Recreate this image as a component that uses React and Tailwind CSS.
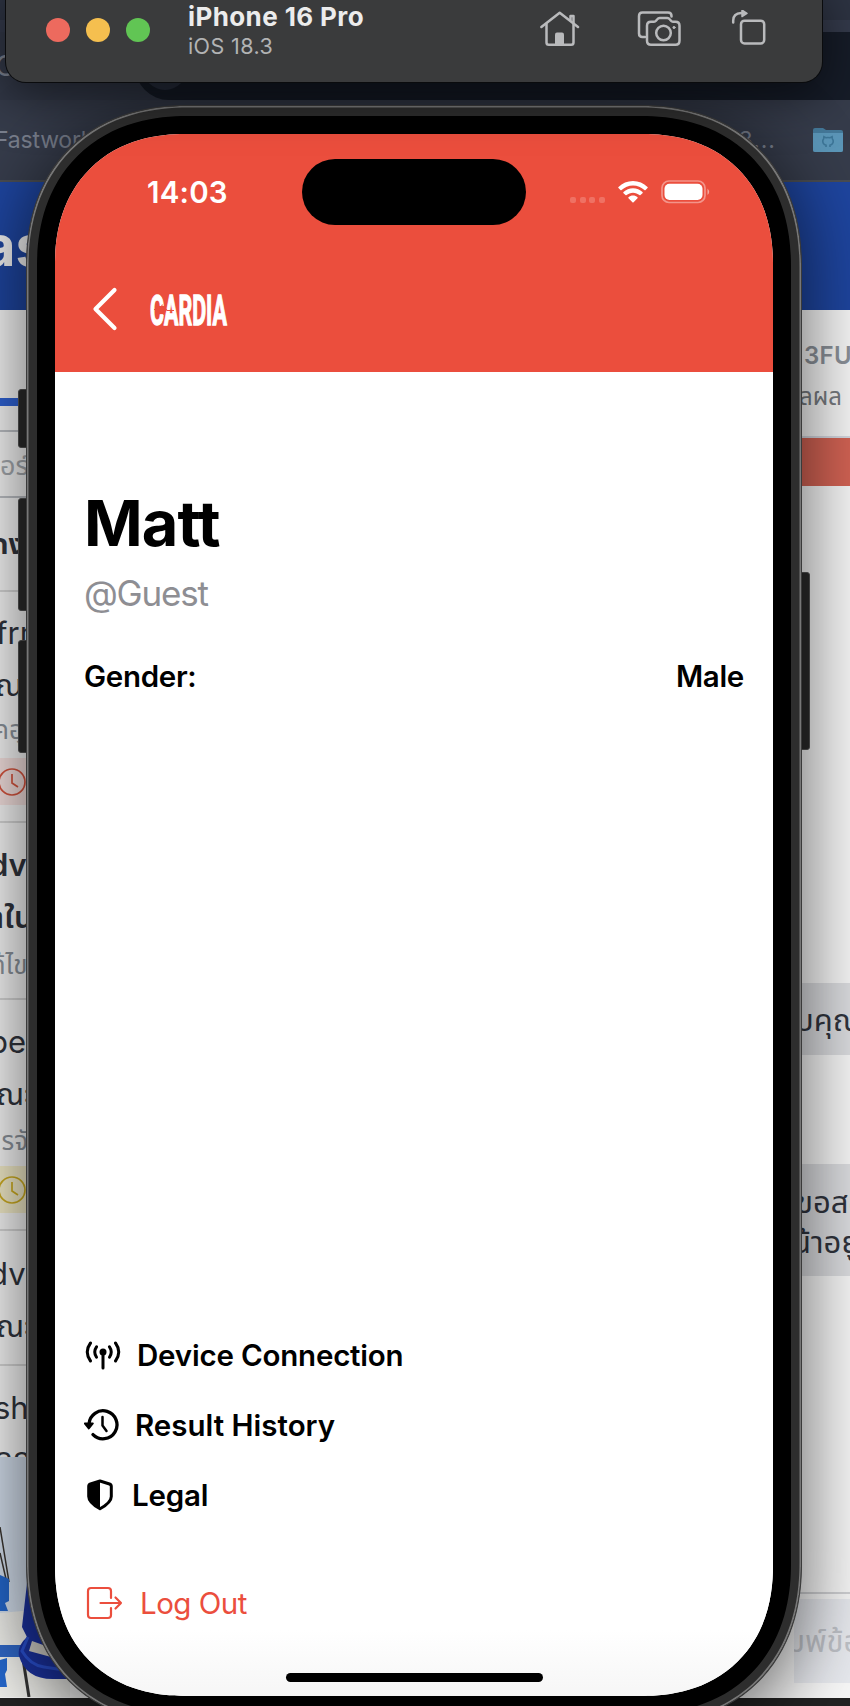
const fontStack = "font-['Inter','Noto_Sans','Noto_Sans_Thai','Loma','Garuda',sans-serif]";

function Line({ className, children }) {
  return (
    <div className={`flex shrink-0 items-center overflow-hidden whitespace-nowrap ${className}`}>
      <span>{children}</span>
    </div>
  );
}

function ClockBand({ className }) {
  return (
    <div className={`flex h-[47px] shrink-0 items-center ${className}`}>
      <svg width="28" height="28" viewBox="0 0 28 28" className="-ml-[2px] shrink-0" fill="none" stroke="currentColor" strokeWidth="1.7">
        <circle cx="14" cy="14" r="13" />
        <path d="M14 6v9l6 4" />
      </svg>
    </div>
  );
}

function Browser() {
  return (
    <div className="flex h-[1706px] w-[850px] flex-col bg-[#222]">
      <div className="h-5 shrink-0 bg-[#2d3342]" />
      <div className="flex h-3 shrink-0 justify-end bg-[#343a4b]" />
      <div className="flex h-[68px] shrink-0 items-start bg-[#323847]">
        <span className="-ml-[5px] mt-[16px] text-[28px] leading-9 text-[#7b818f]">G</span>
        <div className="ml-[119px] h-[68px] flex-1 rounded-bl-[34px] bg-[#161c28] pl-2">
          <div className="h-[58px] w-[44px] rounded-full bg-[#293040]" />
        </div>
      </div>
      <div className="flex h-[80px] shrink-0 items-center justify-between bg-[#363c4b]">
        <span className="-ml-[5px] text-[23px] tracking-[-0.2px] text-[#7b818f]">Fastwork</span>
        <div className="flex items-center pr-[7px]">
          <span className="mr-[37px] text-[23px] tracking-[1px] text-[#7b818f]">3...</span>
          <svg width="30" height="26" viewBox="0 0 30 26">
            <path d="M0 3Q0 1 2 1h8l3 2h15q2 0 2 2v18q0 2-2 2H2q-2 0-2-2z" fill="#45799a" />
            <path d="M0 6h30v17q0 2-2 2H2q-2 0-2-2z" fill="#5c97b9" />
            <path d="M13 20v-2.500M17 20v-2.500M13.200 18.300q-3.700-1-3.400-4.400.2-1.500.9-2.200l.2-1.900 2 .9q2-.5 4.200 0l2-.9.2 1.900q.7.7.9 2.200.3 3.400-3.400 4.400" fill="none" stroke="#3d7698" strokeWidth="1.600" />
          </svg>
        </div>
      </div>
      <div className="h-[2px] shrink-0 bg-[#4a4d52]" />
      <div className="flex h-[128px] shrink-0 items-center bg-[#1e459f]">
        <span className="-ml-[17px] mt-[-1px] text-[56px] font-bold text-[#f0f0f0]">as</span>
      </div>
      <div className="flex h-[1388px] shrink-0 justify-between bg-[#f7f7f7] text-[#30343d]">
        <div className="flex w-[70px] flex-col overflow-hidden">
          <div className="h-[88px] shrink-0" />
          <div className="h-2 shrink-0 bg-[#2f62d4]" />
          <div className="h-[26px] shrink-0 border-b-2 border-[#bcbfc4]" />
          <Line className="h-[66px] border-b-2 border-[#bcbfc4] pt-[4px] text-[27px] text-[#a5a9ae]">อร์</Line>
          <Line className="h-[94px] border-b-2 border-[#d6d6d6] text-[28px] font-bold"><span className="-ml-[9px]">ถง</span></Line>
          <Line className="mt-[19px] h-[44px] text-[31px]"><span className="-ml-[4px]">frm</span></Line>
          <Line className="h-[54px] pt-[6px] text-[31px]"><span className="-ml-[5px]">ณ</span></Line>
          <Line className="h-[40px] text-[26px] text-[#8c939b]"><span className="-ml-[7px]">คอุ</span></Line>
          <ClockBand className="mt-[9px] bg-[#f6e2e0] text-[#d8553f]" />
          <div className="h-[18px] shrink-0 border-b-2 border-[#d6d6d6]" />
          <Line className="mt-[19px] h-[46px] text-[31px] font-semibold"><span className="-ml-[11px]">dv</span></Line>
          <Line className="h-[53px] pt-[6px] text-[31px] font-semibold"><span className="-ml-[9px]">าใน</span></Line>
          <Line className="h-[46px] text-[26px] text-[#8c939b]"><span className="-ml-[10px]">ก้ไข</span></Line>
          <div className="h-[13px] shrink-0 border-b-2 border-[#d6d6d6]" />
          <Line className="mt-[19px] h-[46px] text-[31px]"><span className="-ml-[11px]">be</span></Line>
          <Line className="h-[52px] pt-[6px] text-[31px]"><span className="-ml-[4px]">ณะ</span></Line>
          <Line className="h-[46px] text-[26px] text-[#8c939b]"><span className="-ml-[9px]">ารจั</span></Line>
          <ClockBand className="mt-[3px] bg-[#f4edca] text-[#cfae22]" />
          <div className="h-[18px] shrink-0 border-b-2 border-[#d6d6d6]" />
          <Line className="mt-[20px] h-[46px] text-[31px]"><span className="-ml-[11px]">dv</span></Line>
          <Line className="h-[52px] pt-[6px] text-[31px]"><span className="-ml-[4px]">ณะ</span></Line>
          <div className="h-[17px] shrink-0 border-b-2 border-[#d6d6d6]" />
          <Line className="mt-[19px] h-[46px] text-[31px]"><span className="-ml-[6px]">sht</span></Line>
          <Line className="h-[26px] items-start text-[31px] leading-[54px]"><span className="-ml-[6px]">คณ</span></Line>
          <svg width="90" height="240" viewBox="0 0 90 240" className="h-[240px] w-[90px] shrink-0">
            <rect width="90" height="240" fill="#d3deec" />
            <path d="M0 156l90-8v92H0z" fill="#eeeeea" />
            <path d="M0 70l9 55M0 96l6 26" stroke="#39342f" strokeWidth="1.500" />
            <path d="M0 118l9 4v22l-4 2 3 8H0z" fill="#2467cc" />
            <path d="M0 188h24v12H0z" fill="#2f66c4" />
            <path d="M0 203l7-2v12l-2 4 2 13H0z" fill="#2467cc" />
            <path d="M23 202l6 38" stroke="#333" strokeWidth="3" />
            <path d="M27 126l-5 44 5 10q-10 9-8 19 7 24 36 23h35v-96z" fill="#1b32a0" />
            <path d="M28 180l-6 14q8 14 22 16l20 3" fill="none" stroke="#2a50d0" strokeWidth="3" />
            <path d="M32 184l14 5 5 11-22-6z" fill="#d6d3cc" />
          </svg>
        </div>
        <div className="flex w-[56px] flex-col overflow-hidden">
          <Line className="mt-[26px] h-[40px] text-[24px] font-semibold tracking-[0.3px] text-[#8b9199]"><span className="ml-[10px]">3FUN</span></Line>
          <Line className="h-[42px] text-[24px] text-[#777b80]"><span className="ml-[5px]">ลผล</span></Line>
          <div className="h-[20px] shrink-0 border-b-2 border-[#d5d8e0]" />
          <div className="h-12 shrink-0 bg-[#d36354]" />
          <Line className="mt-[497px] h-[72px] bg-[#dcdde0] pt-[3px] text-[31px]"><span className="ml-[1px]">บคุณ</span></Line>
          <div className="mt-[109px] flex h-[112px] shrink-0 flex-col overflow-hidden bg-[#dcdde0] pt-[18px] text-[31px] whitespace-nowrap">
            <span className="ml-[2px] h-10 leading-10">ขอสอบ</span>
            <span className="-ml-[2px] h-10 leading-10">น้าอยู่</span>
          </div>
          <div className="mt-[316px] h-[2px] shrink-0 bg-[#cfd0d3]" />
          <Line className="mt-[5px] h-[84px] bg-[#e7e9ee] text-[31px] text-[#bfc2c8]"><span className="-ml-[8px]">มพ์ข้อ</span></Line>
        </div>
      </div>
    </div>
  );
}

function TitleBar() {
  return (
    <div className="absolute top-[-20px] left-[6px] flex h-[102px] w-[816px] items-center rounded-[20px] bg-[#3a3b3c] pt-[20px] shadow-[0_0_0_1px_#0a0b0d,0_14px_50px_rgba(0,0,0,0.55)]">
      <div className="mb-[22px] ml-[40px] flex gap-4">
        <i className="size-6 rounded-full bg-[#ed6a5e]" />
        <i className="size-6 rounded-full bg-[#f5bf4f]" />
        <i className="size-6 rounded-full bg-[#61c554]" />
      </div>
      <div className="mb-[20px] ml-[38px] flex w-[352px] flex-col">
        <span className="h-[30px] text-[26px] leading-[30px] font-bold tracking-[0.4px] text-[#ececec]">iPhone 16 Pro</span>
        <span className="h-[29px] text-[21.500px] leading-[29px] tracking-[0.4px] text-[#b2b3b4]">iOS 18.3</span>
      </div>
      <div className="mb-[25px] flex items-center text-[#b9babc]">
        <svg width="40" height="38" viewBox="540 10 40 38" fill="none" stroke="currentColor" strokeWidth="2.500" strokeLinecap="round" strokeLinejoin="round">
          <path d="M541.400 27l18.300-14.200L578 27" />
          <path d="M546.500 24v18.500q0 2.300 2.300 2.300h22.400q2.300 0 2.300-2.300V16h-3v4" />
          <path d="M555 45V34.500q0-2 2-2h5q2 0 2 2V45z" fill="currentColor" stroke="none" />
        </svg>
        <svg width="44" height="38" viewBox="637 10 44 38" className="ml-[57px]" fill="none" stroke="currentColor" strokeWidth="2.500" strokeLinecap="round" strokeLinejoin="round">
          <path d="M645 37h-2.500q-3.500 0-3.500-3.500V16q0-3.500 3.500-3.500h25.500q3.500 0 3.500 3.500v.6" />
          <path d="M651 21.700h3q1.200 0 2-1l1.300-1.500q.9-1.100 2.400-1.100h7.600q1.500 0 2.400 1.100l1.300 1.500q.8 1 2 1h2.500q4 0 4 4v15q0 4-4 4H651q-4 0-4-4v-15q0-4 4-4z" />
          <circle cx="663.500" cy="33" r="7.300" />
          <circle cx="674" cy="27.500" r="1.100" fill="currentColor" strokeWidth="1" />
        </svg>
        <svg width="36" height="38" viewBox="731 9.500 36 38" className="ml-[50px]" fill="none" stroke="currentColor" strokeWidth="2.500" strokeLinecap="round" strokeLinejoin="round">
          <rect x="741" y="20.200" width="23.200" height="22.800" rx="3.500" />
          <path d="M733.200 22v-2q0-7 8-7.500h1.500" />
          <path d="M742 9.600l5 3.200-5 3.200z" fill="currentColor" strokeWidth="1.500" />
        </svg>
      </div>
    </div>
  );
}

function Logo() {
  return (
    <svg width="80" height="38" viewBox="0 0 80 38" className="ml-[31px]">
      <text x="1" y="35" textLength="77" lengthAdjust="spacingAndGlyphs" fontSize="42.500" fontWeight="700" className="font-['Roboto',sans-serif]" fill="#fff" stroke="#fff" strokeWidth="1.300">CARDIA</text>
      <path d="M5 19.500h6l2-4 1.500 9 2-6 1.500 2H25" fill="none" stroke="#eb4e3d" strokeWidth="1.100" />
    </svg>
  );
}

function StatusBar() {
  return (
    <div className="mt-[25px] flex h-[66px] shrink-0 items-center">
      <span className="w-[247px] pl-[92px] text-[29.500px] font-semibold tracking-[0.2px] text-white">14:03</span>
      <div className="h-[66px] w-[224px] rounded-full bg-black" />
      <div className="mt-[16px] ml-[44px] flex gap-[3.700px]">
        <i className="size-[6px] rounded-[2px] bg-white/20" />
        <i className="size-[6px] rounded-[2px] bg-white/20" />
        <i className="size-[6px] rounded-[2px] bg-white/20" />
        <i className="size-[6px] rounded-[2px] bg-white/20" />
      </div>
      <svg width="30" height="22" viewBox="0 0 30 22" className="ml-[13px]" fill="#fff">
        <path d="M15 0c5.600 0 10.700 2.200 14.500 5.900q.6.600 0 1.200l-1.900 1.900q-.6.600-1.200 0C23.400 6.100 19.400 4.400 15 4.400S6.600 6.100 3.600 9q-.6.600-1.200 0L.5 7.100q-.6-.6 0-1.200C4.300 2.200 9.400 0 15 0z" />
        <path d="M15 7.300c3.700 0 7 1.400 9.500 3.700q.6.600 0 1.200l-2 1.900q-.5.500-1.100 0c-1.700-1.500-3.900-2.400-6.400-2.400s-4.700.9-6.400 2.400q-.6.500-1.100 0l-2-1.900q-.6-.6 0-1.200C8 8.700 11.300 7.300 15 7.300z" />
        <path d="M15 14.600c1.700 0 3.300.6 4.500 1.600q.6.500 0 1.100l-3.900 4q-.6.600-1.200 0l-3.900-4q-.6-.6 0-1.100c1.200-1 2.800-1.600 4.500-1.600z" />
      </svg>
      <svg width="50" height="24" viewBox="0 0 50 24" className="ml-[13px]">
        <rect x="1" y="1" width="43" height="21.500" rx="7" fill="none" stroke="#fff" strokeOpacity=".4" strokeWidth="1.700" />
        <rect x="3.500" y="3.700" width="38" height="16.200" rx="5" fill="#fff" />
        <path d="M46.500 8.500q3.400 3.300 0 6.600z" fill="#fff" fillOpacity=".5" />
      </svg>
    </div>
  );
}

function MenuRow({ icon, className, children }) {
  return (
    <div className={`flex h-10 shrink-0 items-center font-semibold whitespace-nowrap ${className}`}>
      {icon}
      <span>{children}</span>
    </div>
  );
}

function Phone() {
  return (
    <>
      <i className="absolute top-[389px] left-[18px] h-[59px] w-3 rounded-[3px] border border-[#555] bg-[#2b2b2b]" />
      <i className="absolute top-[498px] left-[18px] h-[113px] w-3 rounded-[3px] border border-[#555] bg-[#2b2b2b]" />
      <i className="absolute top-[640px] left-[18px] h-[113px] w-3 rounded-[3px] border border-[#555] bg-[#2b2b2b]" />
      <i className="absolute top-[572px] left-[798px] h-[178px] w-3 rounded-[3px] border border-[#555] bg-[#2b2b2b]" />
      <div className="absolute top-[105px] left-[26px] rounded-[145px] border border-[#3a3a3a] bg-[#2d2d2d] p-[10px] shadow-[0_14px_70px_6px_rgba(0,0,0,0.55)] ring-[1.5px] ring-[#777] ring-inset supports-[corner-shape:round]:rounded-[161px] supports-[corner-shape:round]:[corner-shape:superellipse(1.15)]">
        <div className="rounded-[133px] bg-black p-[18px] supports-[corner-shape:round]:rounded-[150px] supports-[corner-shape:round]:[corner-shape:superellipse(1.15)]">
          <div className="flex h-[1562px] w-[718px] flex-col overflow-hidden rounded-[118px] bg-white supports-[corner-shape:round]:rounded-[130px] supports-[corner-shape:round]:[corner-shape:superellipse(1.15)]">
            <div className="flex h-[238px] shrink-0 flex-col bg-[#eb4e3d]">
              <StatusBar />
              <div className="mt-[50px] flex h-[68px] items-center pl-[37px]">
                <svg width="26" height="44" viewBox="0 0 26 44" fill="none" stroke="#fff" strokeWidth="4.200" strokeLinecap="round" strokeLinejoin="round">
                  <path d="M22.500 3L3.500 22l19 19" />
                </svg>
                <Logo />
              </div>
            </div>
            <div className="flex flex-1 flex-col bg-linear-to-b from-white from-95% to-[#f6f6f6] px-[29px] text-black">
              <div className="mt-[116px] h-[70px] text-[63px] leading-[70px] font-bold tracking-[-0.900px]">Matt</div>
              <div className="mt-[13px] h-11 text-[35px] leading-[44px] tracking-[-1.200px] text-[#8e8e93]">@Guest</div>
              <div className="mt-[41px] flex h-10 items-center justify-between text-[29.500px] font-semibold tracking-[-0.300px]">
                <span>Gender:</span>
                <span>Male</span>
              </div>
              <MenuRow className="mt-auto text-[29.500px] tracking-[-0.200px]" icon={
                <svg width="36" height="32" viewBox="0 0 36 32" className="mr-[16px] ml-px" fill="none" stroke="#000" strokeWidth="3" strokeLinecap="round">
                  <circle cx="18" cy="13" r="3.500" fill="#000" stroke="none" />
                  <path d="M18 14v15M11.500 7.800q-3.500 5 0 10.400M24.500 7.800q3.500 5 0 10.400M5.500 4q-6.500 9 0 18M30.500 4q6.500 9 0 18" />
                </svg>
              }>Device Connection</MenuRow>
              <MenuRow className="mt-[30px] text-[29.500px]" icon={
                <svg width="36" height="34" viewBox="0 0 36 34" className="mr-[15px]" fill="none" stroke="#000" strokeWidth="3.300" strokeLinecap="round" strokeLinejoin="round">
                  <path d="M5 16a14 14 0 1 1 4 10.600" />
                  <path d="M.8 15.500h8L4.800 20.500z" fill="#000" strokeWidth="2" />
                  <path d="M18.500 9v8.500l4 5.500" strokeWidth="2.500" />
                </svg>
              }>Result History</MenuRow>
              <MenuRow className="mt-[30px] text-[29.500px] tracking-[-0.200px]" icon={
                <svg width="28" height="32" viewBox="0 0 28 32" className="mr-[18px] ml-[2px]">
                  <path d="M14 2l9.500 3q1.800.6 1.800 2.500v10q0 6-11.300 12.300Q2.700 23.500 2.700 17.500v-10Q2.700 5.600 4.500 5z" fill="none" stroke="#000" strokeWidth="3" strokeLinejoin="round" />
                  <path d="M14 2v28Q2 23 2 17V6z" fill="#000" />
                </svg>
              }>Legal</MenuRow>
              <div className="mt-[68px] flex h-10 items-center text-[29.500px] tracking-[-0.500px] text-[#eb4e3d]">
                <svg width="37" height="34" viewBox="0 0 37 34" className="mr-[17px] ml-[2px]" fill="none" stroke="currentColor" strokeWidth="2.200" strokeLinecap="round" strokeLinejoin="round">
                  <path d="M25 12V5Q25 2 22 2H5Q2 2 2 5v24q0 3 3 3h17q3 0 3-3v-7" />
                  <path d="M14.500 17H35M29.500 11.500L35 17l-5.500 5.500" />
                </svg>
                <span>Log Out</span>
              </div>
              <div className="mt-[50px] mb-[14px] h-[9px] w-[257px] shrink-0 self-center rounded-full bg-black" />
            </div>
          </div>
        </div>
      </div>
    </>
  );
}

export default function App() {
  return (
    <div className={`relative h-[1706px] w-[850px] overflow-hidden ${fontStack}`}>
      <Browser />
      <Phone />
      <TitleBar />
    </div>
  );
}
